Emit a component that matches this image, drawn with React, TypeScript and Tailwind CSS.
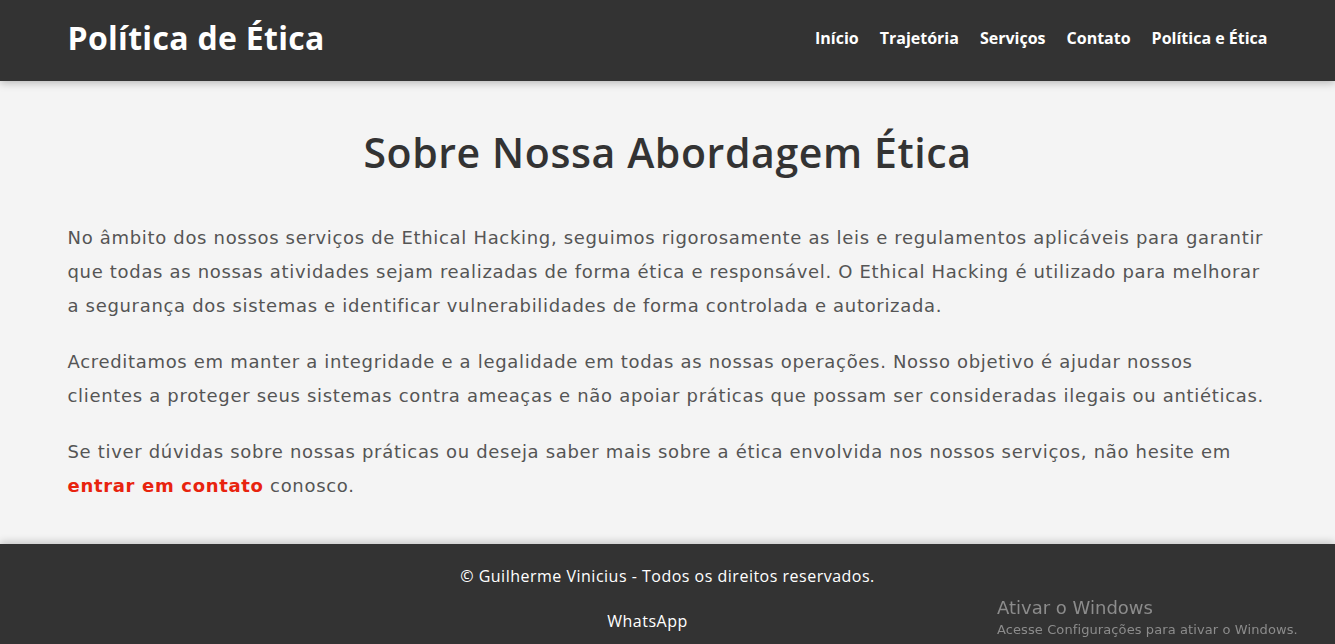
const links = ["Início", "Trajetória", "Serviços", "Contato", "Política e Ética"];

export default function App() {
  return (
    <div className="min-h-screen bg-[#f4f4f4] font-['Open_Sans',sans-serif]">
      <header className="relative z-10 bg-[#333333] text-white shadow-[0_2px_8px_rgba(0,0,0,0.25)]">
        <div className="mx-auto flex h-[81px] max-w-[1200px] items-center justify-between pb-[6px]">
          <h1 className="text-[32px] font-bold tracking-[0.3px]">Política de Ética</h1>
          <nav className="flex gap-[21px] text-[16px] font-bold">
            {links.map((l) => (
              <a key={l} href="#" className="text-white">
                {l}
              </a>
            ))}
          </nav>
        </div>
      </header>

      <main className="mx-auto max-w-[1200px] pt-[47px] pb-[41px] text-[#555555]">
        <h2 className="text-center text-[41px] leading-[48px] font-semibold tracking-[0.6px] text-[#333333]">
          Sobre Nossa Abordagem Ética
        </h2>
        <div className="mt-[45px] flex flex-col gap-[22px] font-['DejaVu_Sans',sans-serif] text-[18px] leading-[34px] tracking-[0.68px]">
          <p>
            No âmbito dos nossos serviços de Ethical Hacking, seguimos rigorosamente as leis e regulamentos
            aplicáveis para garantir que todas as nossas atividades sejam realizadas de forma ética e responsável.
            O Ethical Hacking é utilizado para melhorar a segurança dos sistemas e identificar vulnerabilidades de
            forma controlada e autorizada.
          </p>
          <p>
            Acreditamos em manter a integridade e a legalidade em todas as nossas operações. Nosso objetivo é
            ajudar nossos clientes a proteger seus sistemas contra ameaças e não apoiar práticas que possam ser
            consideradas ilegais ou antiéticas.
          </p>
          <p>
            Se tiver dúvidas sobre nossas práticas ou deseja saber mais sobre a ética envolvida nos nossos
            serviços, não hesite em{" "}
            <a href="#" className="font-bold text-[#e8230e]">
              entrar em contato
            </a>{" "}
            conosco.
          </p>
        </div>
      </main>

      <footer className="bg-[#333333] pt-[20px] pb-[20px] text-center text-[16px] leading-[24px] tracking-[0.5px] text-white shadow-[0_-2px_8px_rgba(0,0,0,0.2)]">
        <p>© Guilherme Vinicius - Todos os direitos reservados.</p>
        <p className="mt-[21px] pr-[40px]">
          <a href="#">WhatsApp</a>
        </p>
      </footer>

      <div className="pointer-events-none fixed top-[597px] left-[997px] font-['DejaVu_Sans',sans-serif] text-[#8c8c8c]">
        <div className="text-[18px] leading-[22px]">Ativar o Windows</div>
        <div className="text-[13px] leading-[22px] tracking-[0.1px]">Acesse Configurações para ativar o Windows.</div>
      </div>
    </div>
  );
}
